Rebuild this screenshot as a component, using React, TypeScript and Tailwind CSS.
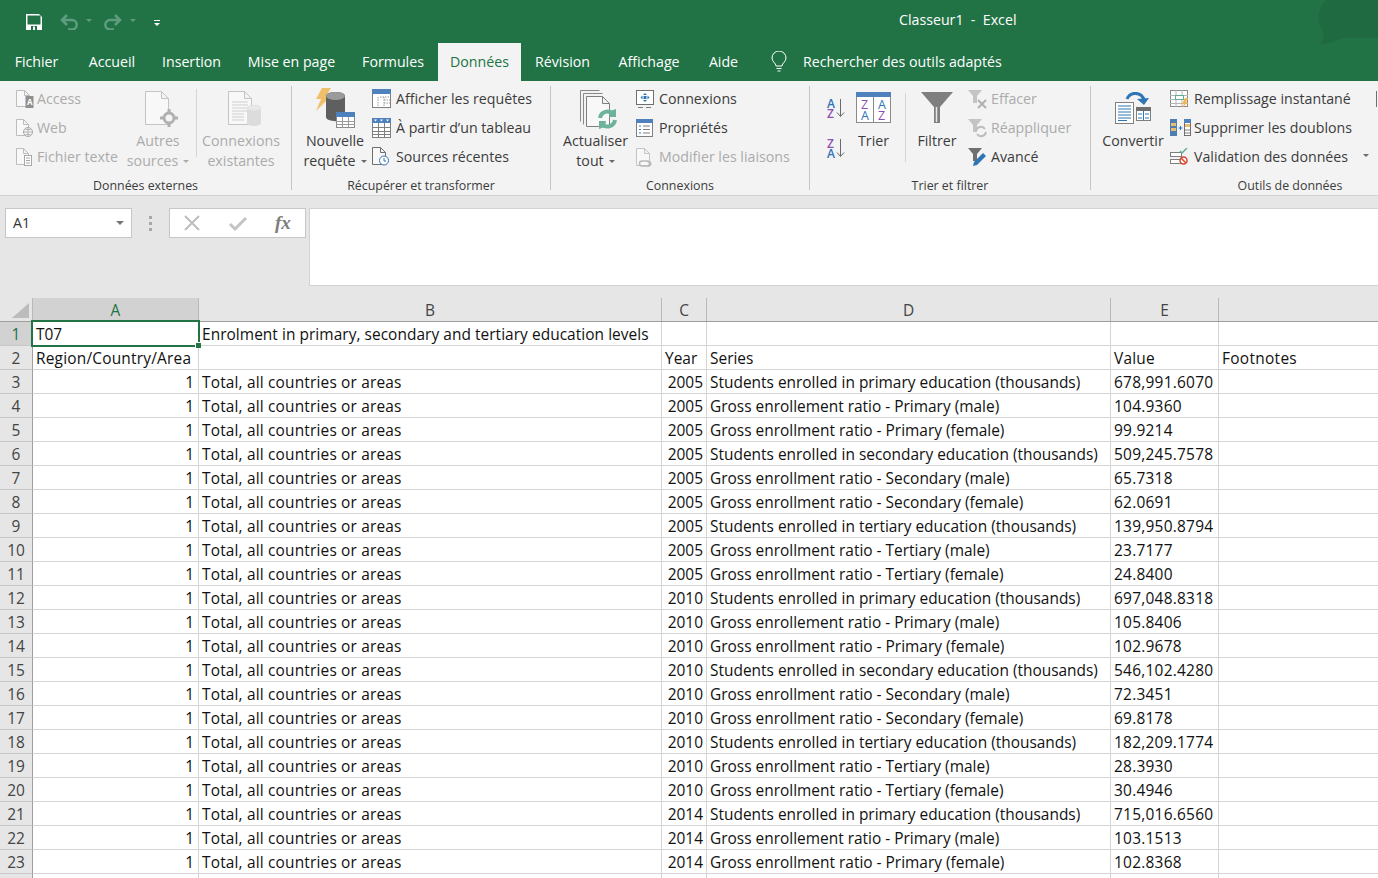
import type { ReactNode } from 'react';

const font = { fontFamily: '"Open Sans", "Noto Sans", sans-serif' };

const series = [
    'Students enrolled in primary education (thousands)',
    'Gross enrollement ratio - Primary (male)',
    'Gross enrollment ratio - Primary (female)',
    'Students enrolled in secondary education (thousands)',
    'Gross enrollment ratio - Secondary (male)',
    'Gross enrollment ratio - Secondary (female)',
    'Students enrolled in tertiary education (thousands)',
    'Gross enrollment ratio - Tertiary (male)',
    'Gross enrollment ratio - Tertiary (female)',
];

const values = [
    '678,991.6070', '104.9360', '99.9214', '509,245.7578', '65.7318', '62.0691', '139,950.8794', '23.7177', '24.8400',
    '697,048.8318', '105.8406', '102.9678', '546,102.4280', '72.3451', '69.8178', '182,209.1774', '28.3930', '30.4946',
    '715,016.6560', '103.1513', '102.8368',
];

const rows = values.map((value, i) => ({
    num: i + 3,
    year: i < 9 ? '2005' : i < 18 ? '2010' : '2014',
    series: series[i % 9],
    value,
}));

function Doc({ x = 0.5, y = 0.5, w = 14, h = 18, c = '#bdbdbd', f = 5 }) {
    return <path d={`M${x} ${y}h${w - f}l${f} ${f}v${h - f}h-${w}zM${x + w - f} ${y}v${f}h${f}`} fill="#f8f8f8" stroke={c} />;
}

function AccessIcon() {
    return (
        <svg width="19" height="20" viewBox="0 0 19 20">
            <Doc x={1.5} y={1.5} w={13} h={16} />
            <rect x="10.500" y="7" width="8" height="12" fill="#8f8f8f" />
            <text x="12" y="16" fontSize="8" fill="#fff" fontWeight="700" style={font}>A</text>
        </svg>
    );
}

function WebIcon() {
    return (
        <svg width="19" height="20" viewBox="0 0 19 20">
            <Doc x={1.5} y={1.5} w={12} h={16} />
            <circle cx="13" cy="14" r="4.500" fill="#f3f3f3" stroke="#a8a8a8" />
            <path d="M8.500 14h9M13 9.500v9M10.500 11.500h5M10.500 16.500h5" stroke="#a8a8a8" strokeWidth="0.800" />
        </svg>
    );
}

function TextFileIcon() {
    return (
        <svg width="19" height="20" viewBox="0 0 19 20">
            <Doc x={1.5} y={1.5} w={12} h={16} />
            <rect x="9.500" y="8.500" width="7" height="10" fill="#fff" stroke="#a8a8a8" />
            <path d="M11 11h4M11 13.500h4M11 16h4" stroke="#a8a8a8" />
        </svg>
    );
}

function OtherSourcesIcon() {
    return (
        <svg className="overflow-visible" width="30" height="40" viewBox="0 0 30 40">
            <Doc x={2.5} y={3.5} w={23} h={33} c="#c4c4c4" f={7} />
            <circle cx="26" cy="30" r="5" fill="#f3f3f3" stroke="#b0b0b0" strokeWidth="3" />
            <path d="M26 21v4M26 35v4M17 30h4M31 30h4" stroke="#b0b0b0" strokeWidth="3" />
        </svg>
    );
}

function ExistingIcon() {
    return (
        <svg width="42" height="40" viewBox="-8 -3 42 40">
            <Doc x={0.5} y={0.5} w={23} h={33} c="#c4c4c4" f={7} />
            <path d="M4 11h16M4 14h16M4 17h16M4 20h16M4 23h12M4 26h12M4 29h12" stroke="#cfcfcf" />
            <path d="M19 17c0-4 14-4 14 0v15c0 4-14 4-14 0z" fill="#dcdcdc" />
            <ellipse cx="26" cy="17" rx="7" ry="2.600" fill="#e8e8e8" />
        </svg>
    );
}

function NewQueryIcon() {
    return (
        <svg width="42" height="42" viewBox="0 0 42 42">
            <path d="M8 2h9l-5 8h5L2 25l5-12H2z" fill="#f0bf6a" />
            <path d="M12 10c0-5.500 19-5.500 19 0v21c0 5.500-19 5.500-19 0z" fill="#5f5f5f" />
            <ellipse cx="21.500" cy="10" rx="9.500" ry="4" fill="#9a9a9a" />
            <rect x="22.500" y="26.500" width="18" height="15" fill="#fff" stroke="#8a8a8a" />
            <rect x="22" y="26" width="19" height="5" fill="#4f81bd" />
            <path d="M22 35.500h19M22 38.500h19M28.500 31v11M34.500 31v11" stroke="#9a9a9a" />
        </svg>
    );
}

function ShowQueriesIcon() {
    return (
        <svg width="19" height="19" viewBox="0 0 19 19">
            <rect x="0.500" y="0.500" width="18" height="18" fill="#fff" stroke="#7f7f7f" />
            <rect x="0" y="0" width="19" height="5" fill="#4f81bd" />
            <path d="M8 8h9M12 8v10M12 11h6M12 14h6M6 8v10" stroke="#9a9a9a" strokeDasharray="1.500 1" />
        </svg>
    );
}

function FromTableIcon() {
    return (
        <svg width="19" height="20" viewBox="0 0 19 20">
            <rect x="0.500" y="0.500" width="18" height="19" fill="#fff" stroke="#7f7f7f" />
            <rect x="0" y="0" width="19" height="5" fill="#4f81bd" />
            <path d="M0 9.500h19M0 13.500h19M0 16.500h19M6.500 5v15M12.500 5v15" stroke="#7f7f7f" />
            <path d="M2 1.500h3l-1.500 2zM8 1.500h3l-1.500 2zM14 1.500h3l-1.500 2z" fill="#fff" />
        </svg>
    );
}

function RecentIcon() {
    return (
        <svg width="18" height="19" viewBox="0 0 18 19">
            <Doc x={0.5} y={0.5} w={13} h={17} c="#6f6f6f" />
            <circle cx="12" cy="13.500" r="4.500" fill="#fff" stroke="#2e75b6" />
            <path d="M12 11v3h2" stroke="#2e75b6" fill="none" />
        </svg>
    );
}

function RefreshAllIcon() {
    return (
        <svg className="overflow-visible" width="38" height="38" viewBox="0 0 38 38">
            <path d="M3.500 31.500V0.500h19" fill="none" stroke="#8a8a8a" />
            <path d="M6.500 34.500V3.500h19" fill="none" stroke="#8a8a8a" />
            <Doc x={9.5} y={6.5} w={23} h={30} c="#7f7f7f" f={7} />
            <path d="M23 28a7.500 7.500 0 0 1 13-4" fill="none" stroke="#6db39a" strokeWidth="4" />
            <path d="M33 21l6-2v8h-7z" fill="#6db39a" />
            <path d="M38 30a7.500 7.500 0 0 1-13 4" fill="none" stroke="#6db39a" strokeWidth="4" />
            <path d="M28 37l-6 2v-8h7z" fill="#6db39a" />
        </svg>
    );
}

function ConnectionsIcon() {
    return (
        <svg width="18" height="18" viewBox="0 0 18 18">
            <rect x="0.500" y="0.500" width="17" height="14" fill="#fff" stroke="#6f6f6f" />
            <path d="M9 3l2 2h-4zM9 12l2-2h-4zM4.500 7.500l2-2v4zM13.500 7.500l-2-2v4z" fill="#2e75b6" />
            <rect x="7.500" y="6" width="3" height="3" fill="#2e75b6" />
            <path d="M2 17.500h5M10 17.500h5" stroke="#7f7f7f" />
        </svg>
    );
}

function PropsIcon() {
    return (
        <svg width="17" height="18" viewBox="0 0 17 18">
            <rect x="0.500" y="0.500" width="16" height="17" fill="#fff" stroke="#7f7f7f" />
            <rect x="0" y="0" width="17" height="4" fill="#4f81bd" />
            <path d="M3 7h2M3 10.500h2M3 14h2" stroke="#2e75b6" />
            <path d="M7 7h7M7 10.500h7M7 14h7" stroke="#7f7f7f" />
        </svg>
    );
}

function EditLinksIcon() {
    return (
        <svg width="18" height="20" viewBox="0 0 18 20">
            <Doc x={0.5} y={1.5} w={13} h={17} c="#c4c4c4" />
            <path d="M6 14h5a2.500 2.500 0 0 1 0 5H6a2.500 2.500 0 0 1 0-5zM11 14.500h2a2.300 2.300 0 0 1 0 4.500h-2" fill="none" stroke="#b8b8b8" strokeWidth="1.500" />
        </svg>
    );
}

function SortAZIcon({ reverse = false }) {
    const a = '#2e75b6';
    const z = '#8e4fb5';
    return (
        <svg className="overflow-visible" width="18" height="20" viewBox="0 0 18 20">
            <text x="0" y="10" fontSize="12" fontWeight="600" fill={reverse ? z : a} style={font}>{reverse ? 'Z' : 'A'}</text>
            <text x="0" y="19.500" fontSize="12" fontWeight="600" fill={reverse ? a : z} style={font}>{reverse ? 'A' : 'Z'}</text>
            <path d="M13.500 1v17M10 14.500l3.500 4 3.500-4" fill="none" stroke="#6a6a6a" />
        </svg>
    );
}

function SortIcon() {
    return (
        <svg width="35" height="36" viewBox="0 0 35 36">
            <rect x="0.500" y="0.500" width="34" height="30" fill="#fff" stroke="#8a8a8a" />
            <rect x="0" y="0" width="35" height="5" fill="#4f81bd" />
            <path d="M17.500 5v26" stroke="#8a8a8a" />
            <text x="5" y="17" fontSize="12.500" fill="#8e4fb5" style={font}>Z</text>
            <text x="5" y="28" fontSize="12.500" fill="#2e75b6" style={font}>A</text>
            <text x="22" y="17" fontSize="12.500" fill="#2e75b6" style={font}>A</text>
            <text x="22" y="28" fontSize="12.500" fill="#8e4fb5" style={font}>Z</text>
        </svg>
    );
}

function FilterIcon() {
    return (
        <svg width="34" height="36" viewBox="0 0 34 36">
            <path d="M1 0h32L20 15v16h-6V15z" fill="#7f7f7f" />
            <path d="M16.500 15v15" stroke="#e8e8e8" strokeWidth="1.500" />
        </svg>
    );
}

function SmallFunnel({ c }: { c: string }) {
    return <path d="M0 1h14L9 7v7H5V7z" fill={c} />;
}

function ClearIcon() {
    return (
        <svg width="20" height="20" viewBox="0 0 20 20">
            <SmallFunnel c="#c4c4c4" />
            <path d="M10 11l8 8M18 11l-8 8" stroke="#b0b0b0" strokeWidth="2" />
        </svg>
    );
}

function ReapplyIcon() {
    return (
        <svg width="20" height="20" viewBox="0 0 20 20">
            <SmallFunnel c="#c4c4c4" />
            <path d="M8 13a5 5 0 0 1 9-2M18 14a5 5 0 0 1-9 2" fill="none" stroke="#bdbdbd" strokeWidth="2" />
        </svg>
    );
}

function AdvancedIcon() {
    return (
        <svg width="20" height="20" viewBox="0 0 20 20">
            <SmallFunnel c="#6f6f6f" />
            <path d="M5 19l1-4 9-9 3 3-9 9z" fill="#2e75b6" />
        </svg>
    );
}

function ConvertIcon() {
    return (
        <svg width="38" height="36" viewBox="0 0 38 36">
            <rect x="1.500" y="10.500" width="18" height="21" fill="#fff" stroke="#7f7f7f" />
            <path d="M4 14h13M4 17h13M4 20h13M4 23h13M4 26h13M4 28.500h9" stroke="#2e75b6" />
            <rect x="22.500" y="15.500" width="14" height="13" fill="#fff" stroke="#7f7f7f" />
            <rect x="22" y="15" width="15" height="4" fill="#6f6f6f" />
            <path d="M24 22h4M31 22h4M24 26h4M31 26h4M29.500 19v9" stroke="#2e75b6" />
            <path d="M13 7a9 9 0 0 1 17 1" fill="none" stroke="#2e75b6" strokeWidth="3" />
            <path d="M23 7l7 6 5-7z" fill="#2e75b6" />
        </svg>
    );
}

function FlashFillIcon() {
    return (
        <svg width="20" height="18" viewBox="0 0 20 18">
            <rect x="0.500" y="0.500" width="17" height="16" fill="#fff" stroke="#8a8a8a" />
            <path d="M0 5.500h18M0 9.500h18M0 13.500h18M6 0v17M12 0v17" stroke="#b5b5b5" />
            <rect x="5.500" y="5.500" width="8" height="4" fill="#fff" stroke="#5fae92" />
            <path d="M15 8l-3 6h2l-2 4 6-6h-2l2-4z" fill="#f2b84f" />
        </svg>
    );
}

function RemoveDupesIcon() {
    return (
        <svg width="21" height="17" viewBox="0 0 21 17">
            <rect x="0" y="0" width="7" height="17" fill="#4f7fb0" />
            <rect x="1" y="4" width="5" height="3" fill="#e7bd74" />
            <rect x="1" y="9" width="5" height="3" fill="#e7bd74" />
            <rect x="14.500" y="0.500" width="6" height="16" fill="#fff" stroke="#6f6f6f" />
            <rect x="14" y="0" width="7" height="4" fill="#4f81bd" />
            <rect x="15" y="5" width="5" height="3" fill="#e7bd74" />
            <path d="M15 11h5M15 14h5" stroke="#7f7f7f" />
            <path d="M8.500 9h4M10.500 7v4" stroke="#2e75b6" />
        </svg>
    );
}

function ValidationIcon() {
    return (
        <svg width="18" height="17" viewBox="0 0 18 17">
            <rect x="0.500" y="4.500" width="11" height="4" fill="#fff" stroke="#7f7f7f" />
            <rect x="0.500" y="11.500" width="10" height="4" fill="#fff" stroke="#7f7f7f" />
            <path d="M10 3l2 2 5-5" fill="none" stroke="#5fae92" strokeWidth="1.500" />
            <circle cx="13.500" cy="12.500" r="3.500" fill="#fff" stroke="#d9472b" strokeWidth="1.500" />
            <path d="M11 10l5 5" stroke="#d9472b" strokeWidth="1.500" />
        </svg>
    );
}

function Caret({ c = '#6a6a6a' }: { c?: string }) {
    return <span className="inline-block ml-[5px] mb-[2px] align-middle w-0 h-0 border-x-[3px] border-t-[3px] border-x-transparent" style={{ borderTopColor: c }} />;
}

function Small({ icon, label, slot, off, w }: { icon: ReactNode; label: string; slot: string; off?: boolean; w?: string }) {
    return (
        <div className={`h-[29px] flex items-center whitespace-nowrap ${w ?? ''}`}>
            <div className={`${slot} flex items-center shrink-0`}>{icon}</div>
            <span className={off ? 'text-[#ababab]' : 'text-[#3c3c3c]'}>{label}</span>
        </div>
    );
}

function Large({ icon, lines, w, off, caret }: { icon: ReactNode; lines: string[]; w: string; off?: boolean; caret?: boolean }) {
    return (
        <div className={`${w} shrink-0 flex flex-col items-center leading-[20px] whitespace-nowrap ${off ? 'text-[#ababab]' : 'text-[#3c3c3c]'}`}>
            <div className="h-[47px] flex items-end justify-center pb-[3px]">{icon}</div>
            {lines.map((line, i) => (
                <div key={line}>
                    {line}
                    {caret && i === lines.length - 1 && <Caret c={off ? '#ababab' : '#6a6a6a'} />}
                </div>
            ))}
        </div>
    );
}

function Group({ w, label, labelClass, children }: { w: string; label: string; labelClass?: string; children: ReactNode }) {
    return (
        <div className={`${w} shrink-0 h-full flex flex-col`}>
            <div className="flex h-[91px] pt-[3px]">{children}</div>
            <div className={`mt-auto h-[20px] leading-[22px] text-[12.4px] text-center text-[#3c3c3c] whitespace-nowrap ${labelClass ?? ''}`}>{label}</div>
        </div>
    );
}

function Sep() {
    return <div className="w-px shrink-0 my-[5px] bg-[#c6c6c6]" />;
}

const tabs = [
    { label: 'Fichier', cls: 'ml-[15px] w-[43px]' },
    { label: 'Accueil', cls: 'ml-[30px] w-[48px]' },
    { label: 'Insertion', cls: 'ml-[27px] w-[57px]' },
    { label: 'Mise en page', cls: 'ml-[27px] w-[89px]' },
    { label: 'Formules', cls: 'ml-[27px] w-[60px]' },
];

const tabsAfter = [
    { label: 'Révision', cls: 'ml-[14px] w-[55px]' },
    { label: 'Affichage', cls: 'ml-[27px] w-[64px]' },
    { label: 'Aide', cls: 'ml-[27px] w-[31px]' },
];

function TitleBar() {
    return (
        <div className="relative h-[43px] flex items-center bg-[#217346] text-white">
            <svg className="ml-[26px]" width="16" height="16" viewBox="0 0 16 16">
                <path d="M0 0h13l3 3v13H0z" fill="#fff" />
                <rect x="1.500" y="1.500" width="13" height="9" fill="#217346" />
                <rect x="5" y="12" width="6" height="4" fill="#217346" />
                <rect x="7" y="12.500" width="2" height="3.500" fill="#fff" />
            </svg>
            <svg className="ml-[18px]" width="32" height="16" viewBox="0 0 32 16">
                <path d="M7 1L2 6l5 5M2 6h10a4.700 4.700 0 0 1 0 9.400H8" fill="none" stroke="#5f9d80" strokeWidth="2.500" />
                <path d="M26 5h6l-3 3z" fill="#5f9d80" />
            </svg>
            <svg className="ml-[11px]" width="33" height="16" viewBox="0 0 33 16">
                <path d="M12 1l5 5-5 5M17 6H7a4.700 4.700 0 0 0 0 9.400h4" fill="none" stroke="#5f9d80" strokeWidth="2.500" />
                <path d="M27 5h6l-3 3z" fill="#5f9d80" />
            </svg>
            <svg className="ml-[18px] mt-[2px]" width="6" height="6" viewBox="0 0 6 6">
                <path d="M0 0h6v1H0zM0 3h6L3 6z" fill="#fff" />
            </svg>
            <div className="absolute left-[899px] top-[10px] text-[14.2px] leading-[20px] whitespace-pre">Classeur1  -  Excel</div>
            <svg className="absolute right-0 top-0" width="62" height="52" viewBox="0 0 62 52">
                <path d="M62 0H10C2 8 0 20 6 30c3 4 3 8-2 14 8 0 16-3 24-6h34z" fill="#1f6a41" />
            </svg>
        </div>
    );
}

function TabBar() {
    return (
        <div className="h-[38px] flex items-stretch bg-[#217346] text-white text-[14.2px] whitespace-nowrap">
            {tabs.map(t => (
                <div key={t.label} className={`${t.cls} flex justify-center pt-[8px]`}>{t.label}</div>
            ))}
            <div className="ml-[15px] w-[83px] flex justify-center pt-[8px] bg-[#f3f3f3] text-[#217346]">Données</div>
            {tabsAfter.map(t => (
                <div key={t.label} className={`${t.cls} flex justify-center pt-[8px]`}>{t.label}</div>
            ))}
            <svg className="ml-[32px] mt-[8px]" width="16" height="21" viewBox="0 0 16 21">
                <path d="M5 15c0-3-4-4-4-8a7 7 0 0 1 14 0c0 4-4 5-4 8zM5.500 17.500h5M6.500 20h3" fill="none" stroke="#fff" />
            </svg>
            <div className="ml-[16px] pt-[8px]">Rechercher des outils adaptés</div>
        </div>
    );
}

function Ribbon() {
    return (
        <div className="h-[115px] flex bg-[#f3f3f3] border-b border-[#d2d2d2] text-[14.2px] overflow-hidden">
            <Group w="w-[291px]" label="Données externes">
                <div className="ml-[15px] w-[113px]">
                    <Small off slot="w-[22px]" icon={<AccessIcon />} label="Access" />
                    <Small off slot="w-[22px]" icon={<WebIcon />} label="Web" />
                    <Small off slot="w-[22px]" icon={<TextFileIcon />} label="Fichier texte" />
                </div>
                <Large off caret w="w-[60px]" icon={<OtherSourcesIcon />} lines={['Autres', 'sources']} />
                <div className="ml-[8px] w-px h-[68px] mt-[5px] bg-[#d6d6d6]" />
                <Large off w="w-[88px]" icon={<ExistingIcon />} lines={['Connexions', 'existantes']} />
            </Group>
            <Sep />
            <Group w="w-[258px]" label="Récupérer et transformer">
                <div className="ml-[12px]">
                    <Large caret w="w-[62px]" icon={<NewQueryIcon />} lines={['Nouvelle', 'requête']} />
                </div>
                <div className="ml-[6px]">
                    <Small slot="w-[24px]" icon={<ShowQueriesIcon />} label="Afficher les requêtes" />
                    <Small slot="w-[24px]" icon={<FromTableIcon />} label="À partir d’un tableau" />
                    <Small slot="w-[24px]" icon={<RecentIcon />} label="Sources récentes" />
                </div>
            </Group>
            <Sep />
            <Group w="w-[258px]" label="Connexions">
                <div className="ml-[11px]">
                    <Large caret w="w-[67px]" icon={<RefreshAllIcon />} lines={['Actualiser', 'tout']} />
                </div>
                <div className="ml-[7px]">
                    <Small slot="w-[23px]" icon={<ConnectionsIcon />} label="Connexions" />
                    <Small slot="w-[23px]" icon={<PropsIcon />} label="Propriétés" />
                    <Small off slot="w-[23px]" icon={<EditLinksIcon />} label="Modifier les liaisons" />
                </div>
            </Group>
            <Sep />
            <Group w="w-[280px]" label="Trier et filtrer">
                <div className="ml-[17px] w-[29px] pt-[14px] flex flex-col gap-[20px]">
                    <SortAZIcon />
                    <SortAZIcon reverse />
                </div>
                <Large w="w-[35px]" icon={<SortIcon />} lines={['Trier']} />
                <div className="ml-[14px] w-px h-[69px] mt-[9px] bg-[#d6d6d6]" />
                <div className="ml-[14px]">
                    <Large w="w-[34px]" icon={<FilterIcon />} lines={['Filtrer']} />
                </div>
                <div className="ml-[14px]">
                    <Small off slot="w-[23px]" icon={<ClearIcon />} label="Effacer" />
                    <Small off slot="w-[23px]" icon={<ReapplyIcon />} label="Réappliquer" />
                    <Small slot="w-[23px]" icon={<AdvancedIcon />} label="Avancé" />
                </div>
            </Group>
            <Sep />
            <Group w="w-[286px]" label="Outils de données" labelClass="pl-[112px]">
                <div className="ml-[12px]">
                    <Large w="w-[60px]" icon={<ConvertIcon />} lines={['Convertir']} />
                </div>
                <div className="ml-[7px]">
                    <Small slot="w-[24px]" icon={<FlashFillIcon />} label="Remplissage instantané" />
                    <Small slot="w-[24px]" icon={<RemoveDupesIcon />} label="Supprimer les doublons" />
                    <div className="flex items-center">
                        <Small slot="w-[24px]" w="w-[188px]" icon={<ValidationIcon />} label="Validation des données" />
                        <Caret />
                    </div>
                </div>
                <div className="ml-auto mt-[7px] w-px h-[16px] bg-[#6f6f6f]" />
            </Group>
        </div>
    );
}

function FormulaBar() {
    return (
        <div className="h-[102px] bg-[#e6e6e6] pt-[12px] pl-[5px] flex items-start">
            <div className="w-[127px] h-[30px] bg-white border border-[#c6c6c6] flex items-center justify-between pl-[7px] pr-[7px] text-[14.2px] text-[#333]">
                A1
                <span className="w-0 h-0 border-x-[4px] border-t-[4px] border-x-transparent border-t-[#777]" />
            </div>
            <div className="ml-[17px] mt-[8px] flex flex-col gap-[3px]">
                <div className="w-[3px] h-[3px] bg-[#a8a8a8]" />
                <div className="w-[3px] h-[3px] bg-[#a8a8a8]" />
                <div className="w-[3px] h-[3px] bg-[#a8a8a8]" />
            </div>
            <div className="ml-[17px] w-[137px] h-[30px] bg-white border border-[#c6c6c6] flex items-center">
                <svg className="ml-[14px]" width="16" height="16" viewBox="0 0 16 16">
                    <path d="M1 1l14 14M15 1L1 15" stroke="#bdbdbd" strokeWidth="2" />
                </svg>
                <svg className="ml-[29px]" width="18" height="15" viewBox="0 0 18 15">
                    <path d="M1 8l5 5L17 2" fill="none" stroke="#c4c4c4" strokeWidth="3" />
                </svg>
                <span className="ml-[28px] text-[19px] italic font-bold text-[#7d7d7d]" style={{ fontFamily: '"Liberation Serif", serif' }}>fx</span>
            </div>
            <div className="ml-[3px] flex-1 h-[78px] bg-white border border-[#d2d2d2] border-r-0" />
        </div>
    );
}

const gridCols = 'grid grid-cols-[33px_166px_463px_45px_404px_108px_1fr]';
const cell = 'h-[24px] leading-[25px] border-r border-b border-[#d4d4d4] bg-white text-[15.45px] text-[#111] pl-[3px] whitespace-nowrap overflow-visible';
const head = 'h-[23px] leading-[24px] text-center border-r border-[#b8b8b8] text-[15.45px] text-[#444] bg-[#e6e6e6]';
const rowHead = 'h-[24px] leading-[25px] text-center border-r border-r-[#9f9f9f] border-b border-b-[#c8c8c8] text-[15.45px] text-[#444] bg-[#e6e6e6]';

function Sheet() {
    return (
        <div className="relative">
            <div className={`${gridCols} border-b border-[#9f9f9f]`}>
                <div className="relative h-[23px] bg-[#e6e6e6] border-r border-[#b8b8b8]">
                    <svg className="absolute left-[12px] top-[5px]" width="17" height="15" viewBox="0 0 17 15">
                        <path d="M17 0v15H0z" fill="#bcbcbc" />
                    </svg>
                </div>
                <div className="h-[23px] leading-[24px] text-center border-r border-[#b8b8b8] text-[15.45px] text-[#217346] bg-[#d2d2d2]">A</div>
                {['B', 'C', 'D', 'E'].map(c => (
                    <div key={c} className={head}>{c}</div>
                ))}
                <div className={`${head} border-r-0`} />
            </div>
            <div className={gridCols}>
                <div className={`${rowHead} !bg-[#d2d2d2] !text-[#217346]`}>1</div>
                <div className={cell}>T07</div>
                <div className={`${cell} tracking-[0.05px]`}>Enrolment in primary, secondary and tertiary education levels</div>
                <div className={cell} />
                <div className={cell} />
                <div className={cell} />
                <div className={`${cell} border-r-0`} />

                <div className={rowHead}>2</div>
                <div className={`${cell} tracking-[0.2px]`}>Region/Country/Area</div>
                <div className={cell} />
                <div className={cell}>Year</div>
                <div className={cell}>Series</div>
                <div className={`${cell} tracking-[0.2px]`}>Value</div>
                <div className={`${cell} border-r-0 tracking-[0.3px]`}>Footnotes</div>

                {rows.map(r => (
                    <div key={r.num} className="contents">
                        <div className={rowHead}>{r.num}</div>
                        <div className={`${cell} text-right pr-[4px]`}>1</div>
                        <div className={`${cell} tracking-[0.17px]`}>Total, all countries or areas</div>
                        <div className={`${cell} text-right pr-[3px]`}>{r.year}</div>
                        <div className={cell}>{r.series}</div>
                        <div className={`${cell} tracking-[0.25px]`}>{r.value}</div>
                        <div className={`${cell} border-r-0`} />
                    </div>
                ))}

                <div className={rowHead} />
                <div className={cell} />
                <div className={cell} />
                <div className={cell} />
                <div className={cell} />
                <div className={cell} />
                <div className={`${cell} border-r-0`} />
            </div>
            <div className="absolute left-[31px] top-[22px] w-[169px] h-[27px] border-2 border-[#217346] pointer-events-none">
                <div className="absolute right-[-3px] bottom-[-3px] w-[6px] h-[6px] bg-[#217346] border-l border-t border-white" />
            </div>
        </div>
    );
}

export default function App() {
    return (
        <div className="w-[1378px] h-[878px] overflow-hidden bg-white" style={font}>
            <TitleBar />
            <TabBar />
            <Ribbon />
            <FormulaBar />
            <Sheet />
        </div>
    );
}
